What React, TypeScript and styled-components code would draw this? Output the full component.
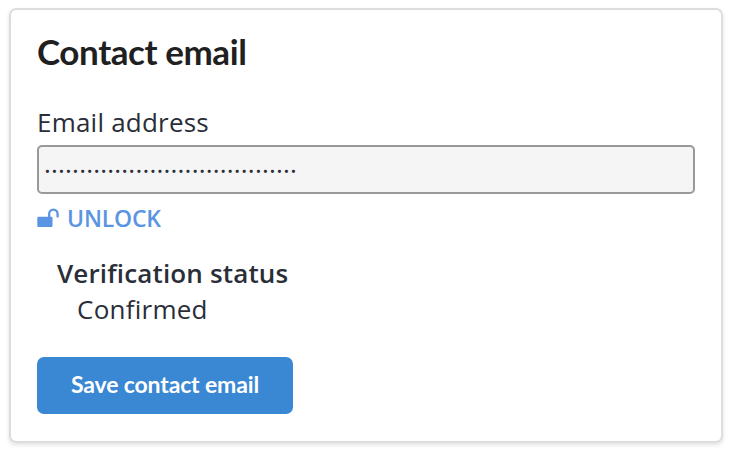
import React from "react";
import styled, { createGlobalStyle } from "styled-components";

const Global = createGlobalStyle`
  * { box-sizing: border-box; }
  body { margin: 0; background: #fff; font-family: "Open Sans", sans-serif; color: #2a2e38; }
`;
const Page = styled.main`padding: 8px 13px 13px 9px;`;
const Card = styled.section`
  height: 435px;
  border: 2px solid #dcdddd;
  border-radius: 7px;
  padding: 16px 26px 0;
  box-shadow: 0 2px 4px rgba(0, 0, 0, 0.12);
`;
const Title = styled.h2`
  margin: 0;
  font: 700 35px/50px Lato, sans-serif;
  letter-spacing: -0.42px;
  color: #1f2021;
`;
const Label = styled.label`
  display: block;
  margin-top: 28px;
  font-size: 26px;
  line-height: 36px;
  font-weight: 400;
  letter-spacing: 0.22px;
`;
const Field = styled.div`
  margin-top: 5px;
  height: 49px;
  border: 2px solid #999;
  border-radius: 5px;
  background: #f5f5f5;
  padding: 0 5px;
  font-size: 26px;
  line-height: 33px;
  letter-spacing: 0.2px;
`;
const Unlock = styled.a`
  display: flex;
  align-items: center;
  gap: 7px;
  height: 36px;
  margin-top: 6px;
  color: #5b94e3;
  font-size: 23px;
  font-weight: 600;
  letter-spacing: -0.2px;
`;
const Status = styled.dl`
  margin: 19px 0 0 20px;
  font-size: 26px;
  line-height: 36px;
  letter-spacing: 0.25px;
`;
const Term = styled.dt`font-weight: 600; letter-spacing: 0.15px;`;
const Value = styled.dd`margin: 0 0 0 20px;`;
const Save = styled.button`
  display: block;
  margin-top: 30px;
  width: 256px;
  height: 57px;
  border: 0;
  padding: 0 0 3px;
  border-radius: 7px;
  background: #3a87d4;
  color: #fff;
  font: 700 23px/30px Lato, sans-serif;
  letter-spacing: -0.15px;
`;

export default function App() {
  return (
    <Page>
      <Global />
      <Card>
        <Title>Contact email</Title>
        <Label>Email address</Label>
        <Field>....................................</Field>
        <Unlock>
          <svg width="23" height="20" viewBox="0 0 23 20" fill="none">
            <rect x="0.3" y="8.8" width="15.2" height="10.2" rx="1.2" fill="currentColor" />
            <path d="M12.2 9.5V5.8a4.2 4.2 0 0 1 8.4 0V8.6" stroke="currentColor" strokeWidth="2.3" strokeLinecap="round" />
          </svg>
          UNLOCK
        </Unlock>
        <Status>
          <Term>Verification status</Term>
          <Value>Confirmed</Value>
        </Status>
        <Save>Save contact email</Save>
      </Card>
    </Page>
  );
}
